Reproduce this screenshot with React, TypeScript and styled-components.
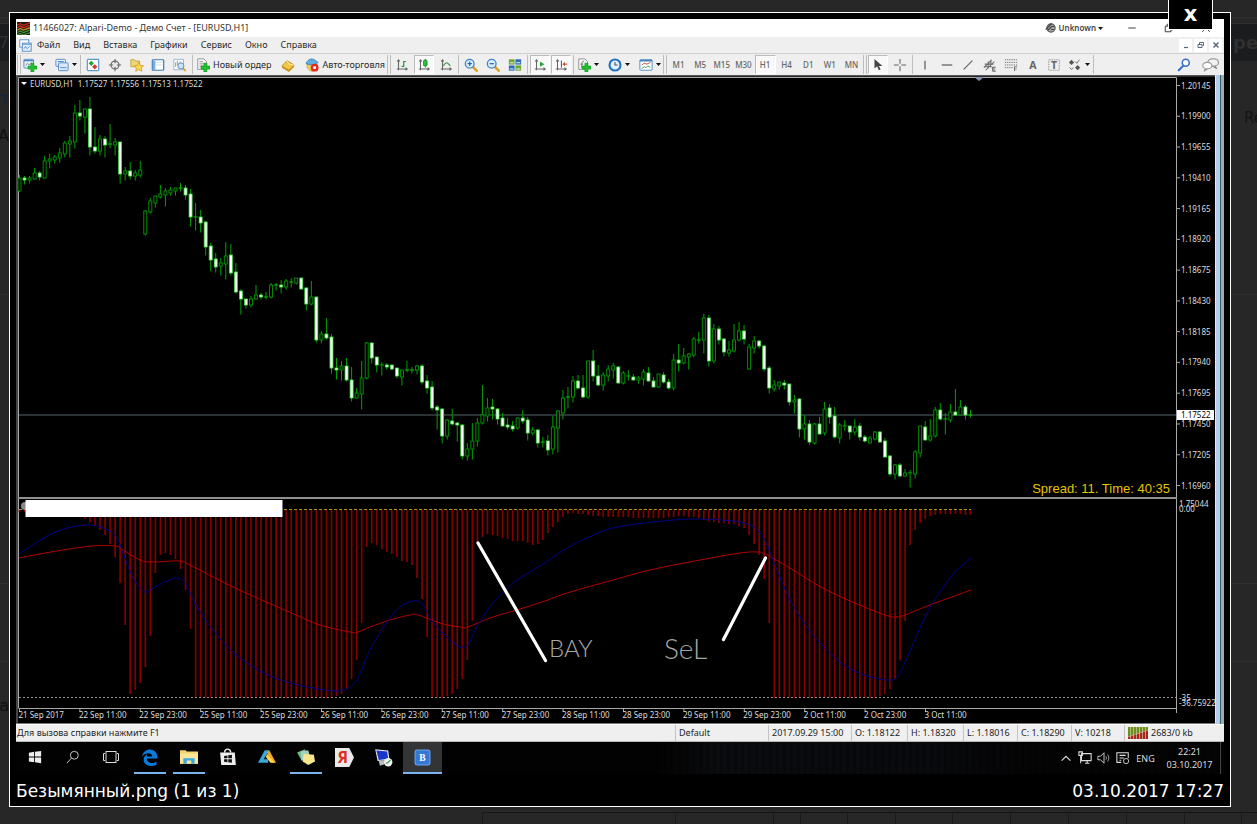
import type { ReactNode } from 'react';
import styled, { createGlobalStyle, css } from 'styled-components';

const GlobalStyle = createGlobalStyle`
  * {
    box-sizing: border-box;
  }

  body {
    margin: 0;
    background-color: #272727;
    font-family: 'DejaVu Sans', Verdana, sans-serif;
  }

  button {
    padding: 0;
    border: 0;
    background: none;
    color: inherit;
    font: inherit;
  }

  svg {
    display: block;
  }
`;

const flexCenter = css`
  display: flex;
  align-items: center;
  justify-content: center;
`;

/* ---------- page behind the viewer ---------- */

const Page = styled.div`
  position: relative;
  min-height: 100vh;
  overflow: hidden;
`;

const Forum = styled.div`
  display: flex;
  flex-direction: column;
  height: 100vh;
  padding-top: 17px;
  color: #101010;
  font-size: 16px;
`;

const ForumRow = styled.div<{ $height: number; $bg?: string; $plain?: boolean }>`
  display: flex;
  flex: none;
  align-items: center;
  justify-content: space-between;
  height: ${({ $height }) => $height}px;
  border-top: ${({ $plain }) => ($plain ? 0 : '1px solid #303030')};
  background-color: ${({ $bg }) => $bg || 'transparent'};
`;

const ForumRight = styled.span<{ $bold?: boolean }>`
  width: ${({ $bold }) => ($bold ? 24 : 13)}px;
  margin-left: auto;
  overflow: hidden;
  color: ${({ $bold }) => ($bold ? '#303030' : '#141414')};
  font-weight: ${({ $bold }) => ($bold ? 700 : 400)};
  font-size: ${({ $bold }) => ($bold ? 18 : 15)}px;
  white-space: nowrap;
`;

const ForumLeft = styled.span<{ $color?: string }>`
  display: flex;
  justify-content: flex-end;
  width: 9px;
  overflow: hidden;
  color: ${({ $color }) => $color || '#101010'};
  white-space: nowrap;
`;

const Pager = styled.div`
  display: flex;
  margin: auto 0 -19px 482px;
  border-top: 1px solid #161616;
`;

const PagerCell = styled.span<{ $width: number }>`
  flex: none;
  width: ${({ $width }) => $width}px;
  height: 30px;
  padding-top: 7px;
  border-left: 1px solid #1a1a1a;
  color: #101010;
  font-size: 14px;
  line-height: 18px;
  text-align: center;
  white-space: nowrap;
`;

/* ---------- viewer ---------- */

const Viewer = styled.section`
  position: absolute;
  top: 12px;
  right: 26px;
  left: 9px;
  padding: 6px;
  border: 1px solid white;
  background-color: black;
`;

const CloseButton = styled.button`
  ${flexCenter};
  position: absolute;
  top: -14px;
  right: 17px;
  width: 45px;
  height: 31px;
  border: 1px solid white;
  background-color: black;
  color: white;
  font-weight: 700;
  font-size: 21px;
  line-height: 21px;
`;

const Caption = styled.footer`
  display: flex;
  justify-content: space-between;
  height: 26px;
  padding-top: 5px;
  color: white;
  font-size: 17px;
  line-height: 24px;
`;

const Screen = styled.div`
  color: #1e1e1e;
  font-size: 9px;
  font-family: 'Noto Sans', 'Open Sans', sans-serif;
  line-height: 12px;
`;

const TitleBar = styled.header`
  display: flex;
  align-items: center;
  height: 18px;
  padding-left: 1px;
  background-color: white;
`;

const WindowTitle = styled.h1`
  flex: 1;
  margin: 0;
  padding-left: 3px;
  color: #333;
  font-weight: 400;
  font-size: 9px;
`;

const Account = styled.button`
  display: flex;
  align-items: center;
  gap: 2px;
  margin-right: 10px;
  color: #444;
  font-weight: 600;
  font-size: 8px;
`;

const WindowButton = styled.button`
  ${flexCenter};
  width: 37px;
  height: 18px;
`;

const MenuBar = styled.nav`
  display: flex;
  align-items: center;
  height: 16px;
  padding: 0 2px 0 3px;
  background-color: #efefef;
`;

const Menu = styled.div`
  display: flex;
  flex: 1;
  gap: 13px;
  padding-left: 5px;
`;

const MenuItem = styled.button`
  color: #2a2a2a;
`;

const MdiButton = styled.button`
  ${flexCenter};
  width: 13px;
  height: 13px;
  margin-left: 2px;
  background-color: white;
  color: #59687c;
`;

const Toolbar = styled.div`
  display: flex;
  align-items: center;
  height: 22px;
  border-top: 1px solid #cfcfcf;
  background-color: #efefef;
`;

const Divider = styled.span<{ $grip?: boolean }>`
  flex: none;
  width: ${({ $grip }) => ($grip ? 4 : 1)}px;
  height: 19px;
  margin: 0 ${({ $grip }) => ($grip ? 1 : 2)}px;
  border-left: 1px solid #bdbdbd;
  border-right: ${({ $grip }) => ($grip ? '1px solid #bdbdbd' : 0)};
`;

const ToolGroup = styled.div<{ $width: number }>`
  display: flex;
  flex: none;
  align-items: center;
  justify-content: space-between;
  width: ${({ $width }) => $width}px;
`;

const Tool = styled.button<{ $pressed?: boolean }>`
  ${flexCenter};
  gap: 3px;
  min-width: 20px;
  height: 19px;
  border: 1px solid transparent;
  color: #2a2a2a;
  white-space: nowrap;

  ${({ $pressed }) =>
    $pressed &&
    css`
      border-color: #bbb #fff #fff #bbb;
      background-color: #f9f9f9;
    `}
`;

const Period = styled(Tool)`
  min-width: 21px;
  color: #666;
  font-weight: 500;
  font-size: 8px;
`;

const Spacer = styled.span`
  flex: 1;
`;

const ToolEnd = styled.div`
  display: flex;
  gap: 6px;
  padding-right: 4px;
`;

const ChartRow = styled.div`
  display: flex;
  background-color: black;
`;

const ChartCell = styled.div`
  flex: 1;
  min-width: 0;

  svg {
    width: 100%;
    height: auto;
  }
`;

const ChartEdge = styled.div`
  width: 9px;
  border-right: 3px solid #a8a8a8;
  background: linear-gradient(to right, #dfe9f5 0 1px, #b5cde6 1px 5px, #2f6075 5px);
`;

const StatusBar = styled.footer`
  display: flex;
  height: 18px;
  border-top: 1px solid #fff;
  border-bottom: 1px solid #b8b8b8;
  background-color: #efefef;
`;

const StatusCell = styled.span<{ $width?: number }>`
  display: flex;
  flex: ${({ $width }) => ($width ? 'none' : 1)};
  align-items: center;
  gap: 3px;
  width: ${({ $width }) => ($width ? `${$width}px` : 'auto')};
  padding-left: ${({ $width }) => ($width ? 3 : 1)}px;
  border-left: ${({ $width }) => ($width ? '1px solid #c4c4c4' : 0)};
  white-space: nowrap;
`;

const Taskbar = styled.div`
  display: flex;
  height: 32px;
  background:
    repeating-linear-gradient(to right, transparent 0 4px, #00000044 4px 7px),
    linear-gradient(to right, #020202 53%, #0b0c0f 58%, #090a0d 76%, #040405 84%);
  color: #ddd;
`;

const TaskButton = styled.button<{ $width?: number; $active?: boolean }>`
  ${flexCenter};
  width: ${({ $width }) => $width || 39}px;
  background-color: ${({ $active }) => ($active ? '#333435' : 'transparent')};
`;

const TaskMark = styled.span<{ $open?: boolean; $active?: boolean }>`
  ${flexCenter};
  width: ${({ $active }) => ($active ? '100%' : '32px')};
  height: 32px;
  border-bottom: 2px solid ${({ $open }) => ($open ? '#79b4ec' : 'transparent')};
`;

const Tray = styled.div`
  display: flex;
  align-items: center;
  margin-left: auto;
  margin-right: 3px;
  border-right: 1px solid #444;
`;

const TrayButton = styled.button`
  ${flexCenter};
  width: 19px;
  height: 32px;
`;

const TrayText = styled.span<{ $width: number }>`
  width: ${({ $width }) => $width}px;
  line-height: 13px;
  text-align: center;
`;

/* ---------- icons ---------- */

const Icon = ({ size = 14, children }: { size?: number; children: ReactNode }) => (
  <svg width={size} height={size} viewBox="0 0 16 16" fill="none" aria-hidden="true">
    {children}
  </svg>
);

const Caret = () => (
  <svg width="5" height="3" viewBox="0 0 5 3" aria-hidden="true">
    <path d="M0 0h5L2.500 3z" fill="#111" />
  </svg>
);

const Plus = () => (
  <path d="M9 6h3.500v3.200H16v3.500h-3.500V16H9v-3.300H5.800V9.200H9z" fill="#1fc12b" stroke="#0b8717" strokeWidth=".6" />
);

const Axes = () => (
  <path d="M4 2v12M2 12.500h12M2.500 4L4 2l1.500 2M12 11l2 1.500-2 1.500" stroke="#666" strokeWidth="1.200" />
);

const Magnifier = ({ minus }: { minus?: boolean }) => (
  <Icon>
    <path d="M10 10l4.500 4.500" stroke="#d9a520" strokeWidth="3" strokeLinecap="round" />
    <circle cx="6.500" cy="6.500" r="5" fill="#d9eefc" stroke="#3d85c8" strokeWidth="1.500" />
    <path d={minus ? 'M4 6.500h5' : 'M4 6.500h5M6.500 4v5'} stroke="#2766b0" strokeWidth="1.400" />
  </Icon>
);

const LogoIcon = () => (
  <Icon size={13}>
    <rect width="16" height="16" fill="#16180e" />
    <path d="M0 4l4-2 4 2 8-3M0 7l4-2 4 2 8-3" stroke="#d02b20" strokeWidth="1.600" />
    <path d="M0 10l4-2 4 2 8-3" stroke="#c98f2a" strokeWidth="1.600" />
    <path d="M0 13l4-2 4 2 8-3M0 16l4-2 4 2 8-3" stroke="#3f9a32" strokeWidth="1.500" />
  </Icon>
);

const WindowsIcon = () => (
  <Icon size={13}>
    <rect x="1" y="1" width="11" height="9" fill="#fff" stroke="#4a83c4" />
    <rect x="4" y="5" width="11" height="10" fill="#e3effb" stroke="#4a83c4" />
    <path d="M4 6.500h11M6 12l2-3 2 3 3-3" stroke="#4a83c4" />
  </Icon>
);

const NewChartIcon = () => (
  <Icon>
    <rect x="1" y="1.500" width="11" height="10" rx="1" fill="#e6f0fb" stroke="#4a83c4" />
    <path d="M1 3h11" stroke="#4a83c4" strokeWidth="1.500" />
    <path d="M3 9l2-3 2 2 3-3" stroke="#888" />
    <Plus />
  </Icon>
);

const ProfilesIcon = () => (
  <Icon>
    <rect x="1" y="1.500" width="11" height="8" rx="1" fill="#e6f0fb" stroke="#4a83c4" />
    <rect x="4" y="5.500" width="11" height="9" rx="1" fill="#d9e9fa" stroke="#4a83c4" />
    <path d="M6 11h7" stroke="#4a83c4" />
    <path d="M3 4h7" stroke="#4a83c4" />
  </Icon>
);

const MarketIcon = () => (
  <Icon>
    <rect x="1.500" y="1.500" width="13" height="13" rx="1" fill="#fff" stroke="#5b9ad0" strokeWidth="1.400" />
    <path d="M3 6l3-3 3 3-3 3z" fill="#21a136" />
    <path d="M7 10l3-3 3 3-3 3z" fill="#d8392b" />
  </Icon>
);

const TargetIcon = () => (
  <Icon>
    <circle cx="8" cy="8" r="4.500" stroke="#666" strokeWidth="1.300" />
    <path d="M8 1v5M8 10v5M1 8h5M10 8h5" stroke="#666" strokeWidth="1.300" />
  </Icon>
);

const STAR = 'M10 5l1.700 3.400 3.800.4-2.800 2.600.8 3.800L10 13.300l-3.500 1.900.8-3.800-2.800-2.600 3.800-.4z';

const FavouriteIcon = () => (
  <Icon>
    <path d="M1 2h4l1 1.500h5V10H1z" fill="#f0d67c" stroke="#c49b30" />
    <path d={STAR} fill="#ffd84a" stroke="#c4902a" strokeWidth=".8" />
  </Icon>
);

const TerminalIcon = () => (
  <Icon>
    <rect x="1.500" y="2" width="13" height="12" rx="1" fill="#fff" stroke="#3c79ba" strokeWidth="1.400" />
    <rect x="2" y="3" width="3" height="11" fill="#77ade0" />
    <path d="M6 5h7M6 8h7" stroke="#c6d8ea" />
  </Icon>
);

const TesterIcon = () => (
  <Icon>
    <rect x="1" y="1.500" width="11" height="12" fill="#fff" stroke="#8fb2d4" />
    <path d="M3 10V5M5 8V3M8 10V4" stroke="#888" />
    <path d="M11.500 11.500l3 3.500" stroke="#d9a520" strokeWidth="2" />
    <circle cx="9" cy="9" r="3.500" fill="#cfe3f6" stroke="#5585b4" />
  </Icon>
);

const OrderIcon = () => (
  <Icon>
    <path d="M2 1h7l3 3v9H2z" fill="#fafafa" stroke="#888" />
    <path d="M4 4h4M4 6h6M4 8h4M4 10h3" stroke="#999" />
    <Plus />
  </Icon>
);

const EditorIcon = () => (
  <Icon>
    <path d="M1 9l6-6 8 5-6 6z" fill="#f3c544" stroke="#b98a1f" />
    <path d="M1 9v2l8 5v-2zM9 14v2l6-6V8z" fill="#c8901c" />
    <path d="M7 3l2 4 6 1" stroke="#fff1b5" />
  </Icon>
);

const ExpertIcon = () => (
  <Icon>
    <path d="M2 7c0 5 3 8 6 8s6-3 6-8z" fill="#f0cf55" stroke="#b98a1f" strokeWidth=".6" />
    <path d="M1 6c2-2 2-4 6-5 4 0 5 2 8 4-2 3-10 4-14 1z" fill="#5faee0" stroke="#2d78af" strokeWidth=".8" />
    <circle cx="11" cy="11" r="4.500" fill="#e02b20" />
    <rect x="9.500" y="9.500" width="3" height="3" fill="#fff" />
  </Icon>
);

const BarsIcon = () => (
  <Icon>
    <Axes />
    <path d="M7.500 9.500h2.500V3.500M10 4h2.500" stroke="#279a3a" strokeWidth="1.400" />
  </Icon>
);

const CandlesIcon = () => (
  <Icon>
    <Axes />
    <path d="M9.500 1v10" stroke="#138722" />
    <rect x="7.500" y="2.500" width="4" height="6.500" rx="1" fill="#2ac63c" stroke="#138722" />
  </Icon>
);

const LineIcon = () => (
  <Icon>
    <Axes />
    <path d="M5 9c2-4 4-4 5-3l3 3" stroke="#3f9b4b" strokeWidth="1.300" />
  </Icon>
);

const TileIcon = () => (
  <Icon>
    <rect x="1" y="1.500" width="6.500" height="6" fill="#6aa92f" />
    <rect x="8.500" y="1.500" width="6.500" height="6" fill="#2d6bb8" />
    <rect x="1" y="8.500" width="6.500" height="6" fill="#2d6bb8" />
    <rect x="8.500" y="8.500" width="6.500" height="6" fill="#6aa92f" />
    <path d="M2 5.500h4.500M9.500 5.500H14M2 12.500h4.500M9.500 12.500H14" stroke="#e8f2ff" strokeWidth="1.200" />
  </Icon>
);

const ScrollIcon = () => (
  <Icon>
    <Axes />
    <path d="M8 4l5 3-5 3z" fill="#24a737" />
  </Icon>
);

const ShiftIcon = () => (
  <Icon>
    <Axes />
    <path d="M8.500 3v8" stroke="#3670aa" strokeWidth="1.300" />
    <path d="M15 7h-3" stroke="#cf4a2b" strokeWidth="1.300" />
    <path d="M12.500 4.500L9.500 7l3 2.500z" fill="#cf4a2b" />
  </Icon>
);

const IndicatorIcon = () => (
  <Icon>
    <path d="M2 1h7l3 3v9H2z" fill="#fafafa" stroke="#888" />
    <path d="M8 4c-3-1-2 3-3 7M4 7h3" stroke="#666" />
    <Plus />
  </Icon>
);

const ClockIcon = () => (
  <Icon>
    <circle cx="8" cy="8" r="6.300" fill="#dff0ff" stroke="#2372bd" strokeWidth="2.400" />
    <path d="M8 4.500V8h3" stroke="#555" strokeWidth="1.200" />
  </Icon>
);

const TemplateIcon = () => (
  <Icon>
    <rect x="1" y="2" width="14" height="12" rx="1" fill="#fff" stroke="#4483c0" />
    <path d="M1 3h14" stroke="#4483c0" strokeWidth="2" />
    <path d="M3 8l3-2 3 1 4-2" stroke="#c0392b" />
    <path d="M3 12l3-2 2 1 2-2 3 2" stroke="#3d9a48" />
  </Icon>
);

const CursorIcon = () => (
  <Icon>
    <path d="M4 1v11l3-2.500L9 14l2-1-2-4h4z" fill="#444" />
  </Icon>
);

const Stroke = ({ d, width = 1.2 }: { d: string; width?: number }) => (
  <Icon>
    <path d={d} stroke="#666" strokeWidth={width} />
  </Icon>
);

const LabelIcon = () => (
  <Icon>
    <rect x="2" y="2" width="12" height="12" stroke="#777" strokeDasharray="1 1" />
    <text x="8" y="12.500" fontSize="12" fontWeight="700" textAnchor="middle" fill="#666">
      T
    </text>
  </Icon>
);

const ArrowsIcon = () => (
  <Icon>
    <path d="M1 5l3-3 3 3-3 3zM8 11l3-3 3 3-3 3z" fill="#555" />
    <path d="M8 4l2 2 3-4M2 11l2 2 2-2" stroke="#555" />
  </Icon>
);

const SearchIcon = () => (
  <Icon>
    <circle cx="10" cy="5.500" r="4" fill="#fff" stroke="#3a6cc7" strokeWidth="1.800" />
    <path d="M7 9l-5 5" stroke="#3a6cc7" strokeWidth="2.400" strokeLinecap="round" />
  </Icon>
);

const ChatIcon = () => (
  <Icon size={17}>
    <ellipse cx="10.500" cy="6" rx="5" ry="3.500" fill="#f2f2f2" stroke="#888" />
    <path d="M12 9l2 3-4-2.500" fill="#f2f2f2" stroke="#888" />
    <ellipse cx="5" cy="9" rx="4.300" ry="3" fill="#fff" stroke="#999" />
    <path d="M3 12l-1 2.500 3-2.500" fill="#fff" stroke="#999" />
  </Icon>
);

/* ---------- chart data, in chart units: [high, top, bottom, low, filled] ---------- */

const CANDLES: number[][] = [
  [175, 178, 191, 191, 0], [176, 178, 180, 184, 1], [176, 178, 180, 183, 0], [168, 173, 179, 179, 0],
  [171, 173, 177, 180, 1], [156, 161, 178, 178, 0], [154, 159, 161, 168, 0], [155, 157, 160, 163, 0],
  [148, 153, 158, 162, 0], [141, 143, 154, 157, 0], [136, 141, 144, 157, 0], [105, 113, 142, 148, 0],
  [100, 113, 116, 120, 1], [109, 109, 117, 133, 0], [97, 109, 147, 155, 1], [127, 147, 151, 153, 1],
  [135, 139, 151, 155, 0], [136, 139, 145, 157, 1], [124, 144, 144, 148, 0], [138, 142, 145, 155, 0],
  [142, 142, 174, 183, 1], [167, 171, 174, 180, 0], [162, 171, 176, 179, 1], [170, 173, 176, 180, 0],
  [161, 170, 175, 177, 0], [210, 211, 234, 235, 0], [198, 201, 212, 213, 0], [196, 196, 203, 207, 0],
  [185, 194, 197, 198, 0], [188, 191, 195, 206, 0], [187, 190, 193, 195, 0], [188, 188, 191, 195, 0],
  [183, 188, 188, 191, 0], [185, 188, 195, 199, 1], [189, 194, 217, 226, 1], [203, 217, 217, 230, 0],
  [210, 217, 223, 232, 1], [221, 222, 247, 255, 1], [243, 246, 260, 271, 1], [253, 259, 267, 272, 1],
  [258, 263, 266, 275, 0], [242, 256, 264, 279, 0], [244, 255, 273, 275, 1], [263, 272, 292, 293, 1],
  [289, 291, 299, 314, 1], [299, 299, 305, 308, 1], [296, 299, 305, 307, 0], [285, 295, 299, 299, 0],
  [293, 295, 297, 299, 1], [292, 297, 297, 299, 0], [283, 285, 297, 298, 0], [283, 285, 285, 290, 0],
  [280, 285, 287, 293, 1], [279, 281, 287, 289, 0], [278, 282, 282, 287, 0], [278, 278, 283, 284, 0],
  [278, 278, 289, 289, 1], [287, 288, 304, 310, 1], [281, 297, 304, 305, 0], [297, 297, 340, 342, 1],
  [331, 334, 340, 343, 0], [318, 334, 338, 339, 1], [334, 337, 368, 373, 1], [358, 368, 370, 379, 1],
  [361, 366, 370, 380, 0], [358, 366, 380, 381, 1], [367, 380, 398, 401, 1], [388, 393, 398, 398, 0],
  [361, 378, 394, 409, 0], [342, 343, 378, 379, 0], [342, 343, 358, 363, 1], [357, 357, 365, 372, 1],
  [362, 365, 366, 375, 1], [363, 365, 367, 369, 1], [365, 365, 369, 370, 1], [368, 368, 376, 378, 1],
  [370, 370, 377, 385, 0], [361, 370, 370, 372, 0], [367, 370, 370, 373, 0], [365, 366, 370, 374, 0],
  [364, 366, 382, 384, 1], [375, 381, 388, 393, 1], [381, 387, 408, 410, 1], [405, 407, 410, 429, 1],
  [408, 409, 436, 443, 1], [419, 420, 436, 439, 0], [409, 421, 424, 425, 1], [422, 423, 425, 441, 1],
  [424, 425, 456, 459, 1], [443, 449, 456, 460, 0], [423, 441, 449, 459, 0], [418, 423, 441, 446, 0],
  [385, 415, 423, 424, 0], [398, 408, 416, 421, 0], [399, 407, 409, 419, 1], [408, 409, 419, 424, 1],
  [413, 418, 426, 426, 1], [418, 425, 427, 429, 1], [421, 426, 429, 431, 1], [417, 418, 428, 429, 0],
  [410, 418, 421, 423, 1], [417, 420, 433, 440, 1], [427, 430, 433, 435, 0], [429, 430, 443, 447, 1],
  [437, 442, 442, 447, 0], [435, 441, 450, 455, 1], [416, 427, 449, 454, 0], [410, 411, 428, 452, 0],
  [390, 398, 413, 419, 0], [387, 397, 397, 408, 0], [376, 381, 397, 402, 0], [375, 381, 388, 389, 1],
  [375, 388, 397, 398, 1], [361, 361, 397, 398, 0], [350, 361, 376, 381, 1], [365, 376, 385, 386, 1],
  [372, 375, 385, 390, 0], [365, 369, 376, 381, 0], [363, 366, 370, 378, 0], [366, 367, 383, 383, 1],
  [371, 373, 383, 384, 0], [370, 376, 376, 380, 0], [374, 377, 380, 380, 1], [376, 378, 380, 383, 0],
  [369, 372, 379, 385, 0], [367, 373, 381, 381, 1], [377, 381, 387, 387, 1], [374, 374, 387, 387, 0],
  [372, 375, 382, 383, 1], [379, 382, 388, 389, 1], [354, 360, 388, 390, 0], [344, 360, 363, 371, 1],
  [348, 356, 363, 364, 0], [353, 354, 357, 369, 0], [337, 339, 355, 357, 0], [332, 340, 340, 343, 0],
  [314, 318, 340, 353, 0], [315, 318, 361, 366, 1], [324, 329, 361, 363, 0], [326, 329, 340, 344, 1],
  [338, 339, 352, 356, 1], [341, 350, 353, 356, 0], [324, 340, 351, 352, 0], [322, 331, 340, 341, 0],
  [325, 331, 339, 344, 1], [344, 347, 369, 369, 0], [336, 341, 348, 353, 0], [340, 341, 346, 348, 1],
  [345, 346, 369, 371, 1], [366, 368, 388, 393, 1], [380, 385, 389, 391, 0], [382, 382, 386, 389, 0],
  [380, 383, 385, 389, 1], [384, 384, 402, 405, 1], [395, 400, 402, 413, 0], [398, 399, 429, 437, 1],
  [415, 424, 429, 439, 0], [420, 424, 442, 444, 1], [423, 424, 443, 444, 0], [417, 424, 434, 434, 1],
  [402, 409, 433, 435, 0], [404, 408, 417, 423, 1], [407, 416, 437, 438, 1], [423, 425, 438, 443, 0],
  [420, 426, 427, 430, 1], [426, 426, 432, 439, 1], [419, 427, 432, 435, 0], [423, 426, 437, 440, 1],
  [435, 437, 441, 442, 1], [436, 438, 443, 443, 0], [431, 432, 439, 440, 0], [431, 432, 442, 442, 1],
  [438, 441, 457, 457, 1], [455, 456, 474, 476, 1], [464, 465, 474, 479, 0], [463, 465, 476, 476, 1],
  [469, 473, 476, 476, 0], [470, 473, 474, 487, 1], [450, 452, 474, 478, 0], [426, 426, 453, 457, 0],
  [421, 427, 440, 440, 1], [419, 436, 440, 441, 0], [407, 410, 436, 437, 0], [403, 410, 419, 420, 1],
  [413, 419, 420, 434, 1], [404, 412, 420, 422, 0], [389, 412, 415, 415, 1], [400, 407, 415, 415, 0],
  [405, 407, 415, 419, 1], [410, 415, 415, 417, 0],
];

const fill = (count: number, value: number) => Array<number>(count).fill(value);

const HISTOGRAM = [
  ...fill(13, 512), 519, 522, 525, 530, 535, 544, 557, 583, 625, 694, 690, 683, 667, 636, 573, 555,
  553, 555, 559, 569, 590, 629, ...fill(28, 698), 696, 694, 689, 679, 660, 623, 547, 543, 545, 549,
  552, 554, 557, 561, 562, 565, 578, 599, 637, 698, 698, 698, 696, 694, 689, 679, 660, 621, 542, 537,
  534, 535, 536, 538, 539, 541, 541, 541, 543, 545, 544, 540, 533, 527, 522, 517, 514, 513, 514, 514,
  515, 516, 516, 517, 517, ...fill(4, 517), ...fill(7, 518), 517, 517, 516, 516, 517, 517, 518,
  520, 521, 522, 523, 523, 524, 524, 526, 528, 535, 544, 555, 579, 623, ...fill(21, 698), 696, 694, 689,
  679, 660, 621, 545, 530, 523, 519, 516, 515, ...fill(5, 514), 515, 515,
];

const BLUE: number[][] = [
  [19, 554], [33, 545], [47, 536], [67, 528], [87, 525], [100, 527], [115, 535], [123, 553], [133, 578],
  [145, 592], [153, 588], [167, 581], [177, 578], [185, 583], [197, 607], [213, 630], [233, 652],
  [260, 671], [287, 682], [313, 688], [337, 691], [350, 687], [358, 678], [370, 650], [387, 622],
  [400, 607], [413, 601], [422, 604], [433, 622], [447, 637], [457, 646], [463, 647], [468, 645],
  [478, 625], [493, 603], [507, 589], [520, 578], [543, 564], [567, 548], [587, 538], [613, 528],
  [653, 522], [693, 519], [733, 521], [750, 525], [760, 533], [767, 545], [777, 570], [790, 600],
  [807, 627], [820, 643], [833, 656], [847, 667], [867, 676], [887, 680], [895, 679], [900, 673],
  [907, 658], [927, 613], [940, 592], [955, 572], [971, 558],
];

const RED: number[][] = [
  [19, 558], [40, 554], [63, 550], [92, 546], [115, 546], [123, 550], [140, 560], [152, 562], [180, 561],
  [190, 565], [233, 587], [287, 611], [320, 625], [350, 632], [358, 632], [370, 627], [390, 620],
  [410, 615], [418, 615], [440, 623], [460, 627], [468, 627], [490, 618], [520, 609], [545, 601],
  [567, 593], [613, 580], [650, 570], [700, 560], [740, 553], [757, 552], [765, 554], [790, 568],
  [819, 586], [850, 601], [885, 615], [897, 617], [905, 615], [930, 605], [971, 590],
];

const DATES = [
  '21 Sep 2017', '22 Sep 11:00', '22 Sep 23:00', '25 Sep 11:00', '25 Sep 23:00', '26 Sep 11:00',
  '26 Sep 23:00', '27 Sep 11:00', '27 Sep 23:00', '28 Sep 11:00', '28 Sep 23:00', '29 Sep 11:00',
  '29 Sep 23:00', '2 Oct 11:00', '2 Oct 23:00', '3 Oct 11:00',
];

const PRICES = Array.from({ length: 14 }, (_, i) => (1.20145 - i * 0.00245).toFixed(5));

const STEP = 951 / 189;
const candleX = (index: number) => 19.5 + index * STEP;

// Catmull-Rom through the points, written as cubic segments
const smooth = (points: number[][]) =>
  points.slice(1).reduce((path, [x, y], i) => {
    const [px, py] = points[i];
    const [ax, ay] = points[i - 1] || points[i];
    const [bx, by] = points[i + 2] || points[i + 1];
    const c1 = `${px + (x - ax) / 6} ${py + (y - ay) / 6}`;
    const c2 = `${x - (bx - px) / 6} ${y - (by - py) / 6}`;
    return `${path}C${c1} ${c2} ${x} ${y}`;
  }, `M${points[0].join(' ')}`);

const Candle = ({ index, data }: { index: number; data: number[] }) => {
  const [high, top, bottom, low, filled] = data;
  const x = candleX(index);
  const flat = bottom - top < 2;

  return (
    <g stroke="#00a000">
      <path d={`M${x} ${high}V${top}M${x} ${bottom}V${low + 0.5}`} />
      {flat ? (
        <path d={`M${x - 2} ${top}h4`} stroke="#00c800" />
      ) : (
        <rect
          x={x - 1.5}
          y={top}
          width="3"
          height={bottom - top}
          fill={filled ? 'white' : 'black'}
          stroke={filled ? '#3fdc3f' : '#009800'}
          strokeWidth={filled ? 0.8 : 0.9}
        />
      )}
    </g>
  );
};

const Chart = () => (
  <svg viewBox="16 75 1199 649" role="img" aria-label="EURUSD,H1" fontSize="8" fill="#dcdcdc">
    <rect x="16" y="75" width="1199" height="649" fill="black" />
    <path d="M16 75.500h1199" stroke="#555" strokeWidth="2" />
    <path d="M17 76v647" stroke="#8a8a8a" />
    <path d="M18.500 708V77.500H1176.500V713M18.500 708.500H1176.500" stroke="#a8a8a8" fill="none" />
    <path d="M16 723.500h1199" stroke="#777" />
    <path d="M974 77h10l-5 4z" fill="#8393a8" />

    <path d="M21 82h6l-3 3z" fill="white" />
    <text x="30" y="87" xmlSpace="preserve">EURUSD,H1  1.17527 1.17556 1.17513 1.17522</text>

    <path d="M19 415h1157" stroke="#56656b" />
    {CANDLES.map((data, i) => (
      <Candle key={i} index={i} data={data} />
    ))}
    <text x="1170" y="493" fontSize="13" fontFamily="Liberation Sans, Arial, sans-serif" textAnchor="end" fill="#e6c400">
      Spread: 11. Time: 40:35
    </text>

    <path d="M18 498h1159" stroke="#909090" strokeWidth="2" />
    <g stroke="#840000" strokeWidth="1.700">
      {HISTOGRAM.map((y, i) => (
        <path key={i} d={`M${candleX(i)} 509.500V${y}`} />
      ))}
    </g>
    <path d="M19 509.500h952" stroke="#a39a1c" strokeDasharray="3 2" />
    <path d="M19 697.500h1157" stroke="#909090" strokeDasharray="2 2" />
    <path d={smooth(RED)} stroke="#b40000" fill="none" />
    <path d={smooth(BLUE)} stroke="#00008c" fill="none" />

    <circle cx="25" cy="506" r="4" fill="#888" />
    <rect x="25.500" y="500" width="257" height="17" fill="white" />

    <path d="M478 543l67.500 117.500M765.500 558l-42 81.500" stroke="white" strokeWidth="3.200" strokeLinecap="round" />
    <g fontFamily="Lato, sans-serif" fontWeight="300" fontSize="24" fill="#a8a8a8">
      <text x="549" y="657">BAY</text>
      <text x="664" y="659" fontSize="28">SeL</text>
    </g>

    {PRICES.map((price, i) => (
      <g key={price}>
        <path d={`M1177 ${85.5 + i * 30.77}h3`} stroke="#a8a8a8" />
        <text x="1181" y={88.5 + i * 30.77}>{price}</text>
      </g>
    ))}
    <rect x="1177" y="410" width="37" height="10" fill="white" />
    <text x="1181" y="418" fill="black">1.17522</text>
    <text x="1179" y="507">1.75044</text>
    <text x="1179" y="512">0.00</text>
    <text x="1179" y="701">-35</text>
    <text x="1179" y="706">-36.75922</text>

    {DATES.map((date, i) => (
      <g key={date}>
        <path d={`M${19.5 + i * 60.4} 709v3`} stroke="#a8a8a8" />
        <text x={18.5 + i * 60.4} y="718">{date}</text>
      </g>
    ))}
  </svg>
);

/* ---------- toolbar and bars ---------- */

const MENU = ['Файл', 'Вид', 'Вставка', 'Графики', 'Сервис', 'Окно', 'Справка'];
const PERIODS = ['M1', 'M5', 'M15', 'M30', 'H1', 'H4', 'D1', 'W1', 'MN'];

const STATUS: [string, number][] = [
  ['Default', 93],
  ['2017.09.29 15:00', 83],
  ['O: 1.18122', 56],
  ['H: 1.18320', 56],
  ['L: 1.18016', 54],
  ['C: 1.18290', 54],
  ['V: 10218', 53],
];

const TRAFFIC = Array.from({ length: 7 }, (_, i) => i);

const TASKS: { name: string; width?: number; open?: boolean; active?: boolean; icon: ReactNode }[] = [
  {
    name: 'Start',
    width: 38,
    icon: (
      <Icon>
        <path d="M1 3l6-1v5.500H1zM8 2l7-1v6.500H8zM1 8.500h6V14l-6-1zM8 8.500h7V15l-7-1z" fill="#eee" />
      </Icon>
    ),
  },
  {
    name: 'Search',
    width: 38,
    icon: (
      <Icon>
        <circle cx="9.500" cy="6" r="4.500" stroke="#ddd" />
        <path d="M6 9.500L1 15" stroke="#ddd" />
      </Icon>
    ),
  },
  {
    name: 'Task view',
    width: 38,
    icon: (
      <Icon size={16}>
        <rect x="3" y="2.500" width="10" height="11" stroke="#ddd" />
        <path d="M2 4.500H.5v7H2M14 4.500h1.500v7H14" stroke="#ddd" />
      </Icon>
    ),
  },
  {
    name: 'Edge',
    open: true,
    icon: (
      <Icon size={17}>
        <path
          d="M1 7C2 2.500 5 .5 8.500.5 13 .5 15.500 4 15.500 9H5.500c.3 5 6 5 9 3v3c-5 2-12 1-12-5 0-3 2-4.500 4-5.500-1 1-1.200 2-1.200 2.500h5.400C10.500 3.500 4.500 2.500 1 7z"
          fill="#0a7bdc"
        />
      </Icon>
    ),
  },
  {
    name: 'Explorer',
    open: true,
    icon: (
      <Icon size={18}>
        <path d="M0 2h5l1 1h10v11H0z" fill="#f5d470" />
        <path d="M0 5h16v9H0z" fill="#fbe596" />
        <path d="M3 14V9h10v5h-3v-3H6v3z" fill="#36a9e0" />
      </Icon>
    ),
  },
  {
    name: 'Store',
    icon: (
      <Icon size={18}>
        <path d="M5 4c0-4 5-4 5.500 0" stroke="#eee" strokeWidth="1.300" />
        <path d="M1 4l13 0 1 11-13 0z" fill="#eee" />
        <path d="M4.500 7l3-.4v2.600h-3zM8.200 6.500l3.300-.5v3.200H8.200zM4.500 10h3v2.600l-3-.4zM8.200 10h3.300v3l-3.300-.4z" fill="#111" />
      </Icon>
    ),
  },
  {
    name: 'Alpari',
    icon: (
      <Icon size={18}>
        <path d="M6 2h4L5 10h4v3H0z" fill="#39a9dc" />
        <path d="M8 4l2-2 6 11h-4z" fill="#f5a623" />
        <path d="M7 8l4 5h4L8 5z" fill="#ffd34e" />
      </Icon>
    ),
  },
  {
    name: 'Notes',
    open: true,
    icon: (
      <Icon size={18}>
        <path d="M0 4l7-3 3 7-6 3z" fill="#6fb77a" />
        <path d="M3 3l7-1 2 8-8 1z" fill="#9fd0c4" />
        <path d="M6 5l9 1 1 6-6 3-5-3z" fill="#f9e58b" />
      </Icon>
    ),
  },
  {
    name: 'Yandex',
    icon: (
      <Icon size={19}>
        <path d="M0 0h12l4 8-4 8H0z" fill="#e9e9e9" />
        <text x="6.500" y="12.500" fontSize="13" fontWeight="700" textAnchor="middle" fill="#e22b20">
          Я
        </text>
      </Icon>
    ),
  },
  {
    name: 'Computer',
    icon: (
      <Icon size={19}>
        <path d="M1 1l11 1 1 8-10 1z" fill="#dfe3ea" />
        <path d="M2 2l9 1 1 6-8 1z" fill="#1c35c9" />
        <path d="M4 11l6-1 1 3-6 2z" fill="#b8bcc4" />
        <circle cx="12" cy="12" r="3.500" fill="#eee" />
        <path d="M10 13l2-1 2-2" stroke="#3c9a4a" />
      </Icon>
    ),
  },
  {
    name: 'Client',
    open: true,
    active: true,
    icon: (
      <Icon size={17}>
        <rect x="1" y="1" width="14" height="14" rx="2" fill="#3577d6" stroke="#6ba5ee" />
        <text x="8" y="11.500" fontSize="9" fontWeight="700" fontFamily="Liberation Serif, serif" textAnchor="middle" fill="white">
          B
        </text>
      </Icon>
    ),
  },
];

const MainToolbar = () => (
  <Toolbar role="toolbar">
    <Divider $grip />
    <ToolGroup $width={56}>
      <Tool aria-label="New chart"><NewChartIcon /><Caret /></Tool>
      <Tool aria-label="Profiles"><ProfilesIcon /><Caret /></Tool>
    </ToolGroup>
    <Divider />
    <ToolGroup $width={107}>
      <Tool aria-label="Market watch"><MarketIcon /></Tool>
      <Tool aria-label="Data window"><TargetIcon /></Tool>
      <Tool aria-label="Navigator"><FavouriteIcon /></Tool>
      <Tool aria-label="Terminal"><TerminalIcon /></Tool>
      <Tool aria-label="Tester"><TesterIcon /></Tool>
    </ToolGroup>
    <Divider />
    <ToolGroup $width={191}>
      <Tool><OrderIcon />Новый ордер</Tool>
      <Tool aria-label="Editor"><EditorIcon /></Tool>
      <Tool><ExpertIcon />Авто-торговля</Tool>
    </ToolGroup>
    <Divider $grip />
    <ToolGroup $width={64}>
      <Tool aria-label="Bars"><BarsIcon /></Tool>
      <Tool aria-label="Candles" $pressed><CandlesIcon /></Tool>
      <Tool aria-label="Line"><LineIcon /></Tool>
    </ToolGroup>
    <Divider />
    <ToolGroup $width={64}>
      <Tool aria-label="Zoom in"><Magnifier /></Tool>
      <Tool aria-label="Zoom out"><Magnifier minus /></Tool>
      <Tool aria-label="Tile windows"><TileIcon /></Tool>
    </ToolGroup>
    <Divider />
    <ToolGroup $width={41}>
      <Tool aria-label="Auto scroll" $pressed><ScrollIcon /></Tool>
      <Tool aria-label="Chart shift" $pressed><ShiftIcon /></Tool>
    </ToolGroup>
    <Divider />
    <ToolGroup $width={86}>
      <Tool aria-label="Indicators"><IndicatorIcon /><Caret /></Tool>
      <Tool aria-label="Periods"><ClockIcon /><Caret /></Tool>
      <Tool aria-label="Templates"><TemplateIcon /><Caret /></Tool>
    </ToolGroup>
    <Divider $grip />
    <ToolGroup $width={194}>
      {PERIODS.map((period) => (
        <Period key={period} $pressed={period === 'H1'}>{period}</Period>
      ))}
    </ToolGroup>
    <Divider $grip />
    <ToolGroup $width={42}>
      <Tool aria-label="Cursor" $pressed><CursorIcon /></Tool>
      <Tool aria-label="Crosshair"><Stroke d="M8 1v5.500M8 9.500V15M1 8h5.500M9.500 8H15" /></Tool>
    </ToolGroup>
    <Divider />
    <ToolGroup $width={149}>
      <Tool aria-label="Vertical line"><Stroke d="M8 3v10" width={1.5} /></Tool>
      <Tool aria-label="Horizontal line"><Stroke d="M2 8h12" width={1.5} /></Tool>
      <Tool aria-label="Trend line"><Stroke d="M3 13L13 3" width={1.5} /></Tool>
      <Tool aria-label="Channel">
        <Stroke d="M1 11l9-9M3 14L13 4M2 7h10M1 10h9M6 4v8M9 2v8M11 10.500h3.500M11 12.500h3M11 15h3.500M11 10v5" />
      </Tool>
      <Tool aria-label="Fibonacci">
        <Icon>
          <path d="M1 2h14M1 5h14M1 8h14M1 11h9" stroke="#666" strokeDasharray="1.500 1" />
          <path d="M12 15v-5h3M12 12.500h2.500" stroke="#666" />
        </Icon>
      </Tool>
      <Tool aria-label="Text">
        <Icon>
          <text x="8" y="12.500" fontSize="12" fontWeight="700" textAnchor="middle" fill="#666">A</text>
        </Icon>
      </Tool>
      <Tool aria-label="Text label"><LabelIcon /></Tool>
    </ToolGroup>
    <ToolGroup $width={27}>
      <Spacer />
      <Tool aria-label="Arrows"><ArrowsIcon /><Caret /></Tool>
    </ToolGroup>
    <Divider />
    <Spacer />
    <ToolEnd>
      <Tool aria-label="Find"><SearchIcon /></Tool>
      <Tool aria-label="Chat"><ChatIcon /></Tool>
    </ToolEnd>
  </Toolbar>
);

const TaskTray = () => (
  <Tray>
    <TrayButton aria-label="Hidden icons">
      <Icon><path d="M3 11l5-5 5 5" stroke="#ddd" strokeWidth="1.300" /></Icon>
    </TrayButton>
    <TrayButton aria-label="Network">
      <Icon>
        <path d="M4 3h11v8H4zM1 1h4v4H1zM3 5v9M8 14h5M10.500 11v3" stroke="#ddd" strokeWidth="1.200" />
      </Icon>
    </TrayButton>
    <TrayButton aria-label="Volume">
      <Icon>
        <path d="M1 6h3l4-4v12l-4-4H1z" stroke="#ddd" />
        <path d="M10 6c1 1 1 3 0 4M12 4c2 2 2 6 0 8" stroke="#aaa" />
      </Icon>
    </TrayButton>
    <TrayButton aria-label="Notifications">
      <Icon>
        <path d="M14 8V2H1v11h5M4 5h7M4 8h5M4 10.500h2" stroke="#ddd" strokeWidth="1.200" />
        <circle cx="11.500" cy="11.500" r="3" stroke="#ddd" />
      </Icon>
    </TrayButton>
    <TrayText $width={27}>ENG</TrayText>
    <TrayText $width={61}>
      22:21
      <br />
      03.10.2017
    </TrayText>
  </Tray>
);

const PAGER: [string, number][] = [
  ['Страница 1241 из 1241', 193], ['Первая', 98], ['<', 27], ['241', 47], ['741', 48], ['1141', 57],
  ['1191', 58], ['1231', 58], ['1237', 58], ['1238', 58], ['1239', 57], ['', 40],
];

const Backdrop = () => (
  <Forum aria-hidden="true">
    <ForumRow $height={6} />
    <ForumRow $height={38} $bg="#1b1c1e">
      <ForumLeft $color="#303030">7</ForumLeft>
      <ForumRight $bold>pe</ForumRight>
    </ForumRow>
    <ForumRow $height={28} $plain />
    <ForumRow $height={24} $plain>
      <ForumLeft $color="#16263a">Т</ForumLeft>
    </ForumRow>
    <ForumRow $height={9} $plain>
      <ForumRight>Re</ForumRight>
    </ForumRow>
    <ForumRow $height={26} $plain>
      <ForumLeft>А</ForumLeft>
    </ForumRow>
    <ForumRow $height={146} $plain />
    <ForumRow $height={289} />
    <ForumRow $height={78} />
    <ForumRow $height={88}>
      <ForumLeft>а</ForumLeft>
    </ForumRow>
    <Pager>
      {PAGER.map(([label, width]) => (
        <PagerCell key={label} $width={width}>{label}</PagerCell>
      ))}
    </Pager>
  </Forum>
);

export default function App() {
  return (
    <Page>
      <GlobalStyle />
      <Backdrop />
      <Viewer>
        <Screen>
          <TitleBar>
            <LogoIcon />
            <WindowTitle>11466027: Alpari-Demo - Демо Счет - [EURUSD,H1]</WindowTitle>
            <Account>
              <Icon size={12}>
                <circle cx="8" cy="8" r="5.500" fill="#aaa" stroke="#555" strokeWidth="1.500" />
                <path d="M1 10L9 2M4 11l5-5h4M8 10h4" stroke="#444" strokeWidth="1.500" />
              </Icon>
              Unknown
              <Caret />
            </Account>
            <WindowButton aria-label="Minimize">
              <Icon size={10}><path d="M2 8h12" stroke="#333" strokeWidth="1.500" /></Icon>
            </WindowButton>
            <WindowButton aria-label="Restore">
              <Icon size={10}><path d="M2 5h9v9H2zM5 5V2h9v9h-3" stroke="#333" strokeWidth="1.500" /></Icon>
            </WindowButton>
            <WindowButton aria-label="Close window">
              <Icon size={10}><path d="M2 2l12 12M14 2L2 14" stroke="#333" strokeWidth="1.500" /></Icon>
            </WindowButton>
          </TitleBar>
          <MenuBar>
            <WindowsIcon />
            <Menu>
              {MENU.map((item) => (
                <MenuItem key={item}>{item}</MenuItem>
              ))}
            </Menu>
            <MdiButton aria-label="Minimize chart">
              <Icon size={8}><path d="M4 13h8" stroke="currentColor" strokeWidth="2.500" /></Icon>
            </MdiButton>
            <MdiButton aria-label="Restore chart">
              <Icon size={8}><path d="M2 7h8v6H2zM5 6V3h8v6h-2" stroke="currentColor" strokeWidth="2" /></Icon>
            </MdiButton>
            <MdiButton aria-label="Close chart">
              <Icon size={8}><path d="M3 3l10 10M13 3L3 13" stroke="currentColor" strokeWidth="3" /></Icon>
            </MdiButton>
          </MenuBar>
          <MainToolbar />
          <ChartRow>
            <ChartCell>
              <Chart />
            </ChartCell>
            <ChartEdge />
          </ChartRow>
          <StatusBar>
            <StatusCell>Для вызова справки нажмите F1</StatusCell>
            {STATUS.map(([label, width]) => (
              <StatusCell key={label} $width={width}>{label}</StatusCell>
            ))}
            <StatusCell $width={100}>
              <svg width="20" height="12" viewBox="0 0 20 12" aria-hidden="true">
                <rect width="20" height="12" fill="#d9dcc0" />
                {TRAFFIC.map((i) => (
                  <g key={i}>
                    <rect x={i * 3} y="0" width="2.400" height={9 - i} fill="#6f8f1e" />
                    <rect x={i * 3} y={9.5 - i} width="2.400" height={2.5 + i} fill="#a8281c" />
                  </g>
                ))}
              </svg>
              2683/0 kb
            </StatusCell>
          </StatusBar>
          <Taskbar>
            {TASKS.map(({ name, width, open, active, icon }) => (
              <TaskButton key={name} aria-label={name} $width={width} $active={active}>
                <TaskMark $open={open} $active={active}>{icon}</TaskMark>
              </TaskButton>
            ))}
            <TaskTray />
          </Taskbar>
        </Screen>
        <Caption>
          <span>Безымянный.png (1 из 1)</span>
          <time>03.10.2017 17:27</time>
        </Caption>
        <CloseButton aria-label="Close">x</CloseButton>
      </Viewer>
    </Page>
  );
}
